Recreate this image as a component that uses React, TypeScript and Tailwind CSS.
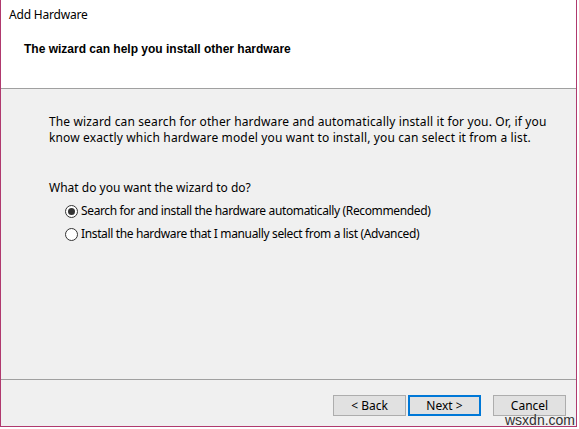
export default function App() {
  const font = { fontFamily: '"Noto Sans", "Open Sans", sans-serif' };
  return (
    <div className="w-[579px] h-[429px] bg-white" style={font}>
      <div className="w-[577px] h-[427px] flex flex-col border-x border-b border-[#b0396e] text-[12px] text-black">
        {/* header */}
        <div className="h-[89px] bg-white border-b border-[#a0a0a0] shrink-0">
          <div className="pl-[8px] pt-[6px] leading-[18px] tracking-[-0.2px]">Add Hardware</div>
          <div className="pl-[23px] pt-[16px] font-bold leading-[18px]" style={{ fontFamily: '"Liberation Sans", sans-serif' }}>
            The wizard can help you install other hardware
          </div>
        </div>

        {/* body */}
        <div className="flex-1 bg-[#f0f0f0] pl-[48px] pt-[25px]">
          <p className="leading-[16px] w-[510px] tracking-[0.14px]">
            The wizard can search for other hardware and automatically install it for you. Or, if you know exactly which hardware model you want to install, you can select it from a list.
          </p>
          <p className="mt-[34px] leading-[16px]">What do you want the wizard to do?</p>
          <div className="pl-[16px] mt-[7px] flex flex-col gap-[7px] tracking-[-0.36px]">
            <label className="flex items-center gap-[3px] leading-[16px]">
              <span className="w-[13px] h-[13px] rounded-full border border-[#333] bg-white flex items-center justify-center">
                <span className="w-[7px] h-[7px] rounded-full bg-[#333]" />
              </span>
              Search for and install the hardware automatically (Recommended)
            </label>
            <label className="flex items-center gap-[3px] leading-[16px]">
              <span className="w-[13px] h-[13px] rounded-full border border-[#333] bg-white" />
              Install the hardware that I manually select from a list (Advanced)
            </label>
          </div>
        </div>

        {/* footer */}
        <div className="h-[47px] bg-[#f0f0f0] border-t border-[#a0a0a0] shrink-0 relative">
          <div className="flex pt-[15px] pl-[332px]">
            <button className="w-[73px] h-[21px] bg-[#e1e1e1] border border-[#adadad] leading-none">&lt; Back</button>
            <button className="ml-[2px] w-[73px] h-[21px] bg-[#e1e1e1] border-2 border-[#0078d7] leading-none">Next &gt;</button>
            <button className="ml-[12px] w-[73px] h-[21px] bg-[#e1e1e1] border border-[#adadad] leading-none">Cancel</button>
          </div>
          <span className="absolute left-[504px] top-[33px] text-[14px] leading-none text-[#333]" style={{ fontFamily: '"Liberation Sans", sans-serif' }}>wsxdn.com</span>
        </div>
      </div>
    </div>
  );
}
